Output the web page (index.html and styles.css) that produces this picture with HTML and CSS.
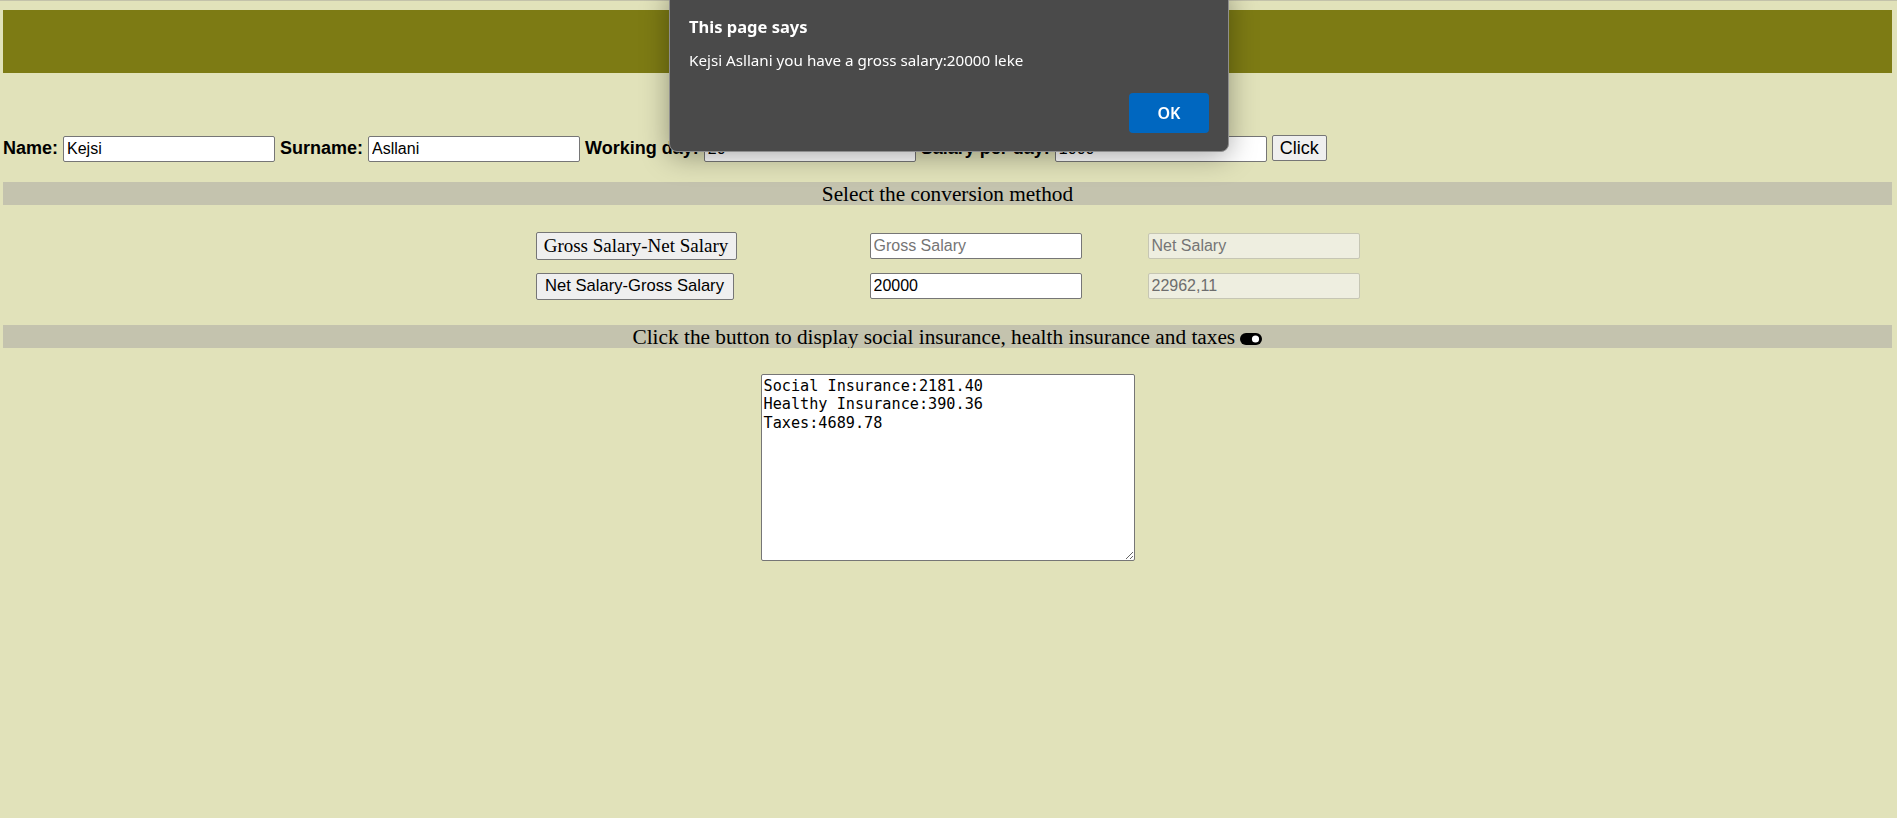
FILE: index.html
```html
<!DOCTYPE html>
<html lang="en">
<head>
<meta charset="utf-8">
<title>Salary Calculator</title>
<link rel="stylesheet" href="styles.css">
</head>
<body>
<div class="page">
  <header class="topbar"></header>

  <form class="info-row">
    <label class="lbl" for="name">Name:</label>
    <input class="field" id="name" type="text" value="Kejsi">
    <label class="lbl" for="surname">Surname:</label>
    <input class="field" id="surname" type="text" value="Asllani">
    <label class="lbl" for="days">Working day:</label>
    <input class="field" id="days" type="text" value="20">
    <label class="lbl" for="perday">Salary per day:</label>
    <input class="field" id="perday" type="text" value="1000">
    <button class="click-btn" type="button">Click</button>
  </form>

  <div class="section-bar">Select the conversion method</div>

  <div class="convert-grid">
    <button class="conv-btn serif" type="button">Gross Salary-Net Salary</button>
    <input class="field conv-in" type="text" placeholder="Gross Salary">
    <input class="field conv-out" type="text" placeholder="Net Salary" disabled>

    <button class="conv-btn sans" type="button">Net Salary-Gross Salary</button>
    <input class="field conv-in" type="text" value="20000">
    <input class="field conv-out" type="text" value="22962,11" disabled>
  </div>

  <div class="section-bar">Click the button to display social insurance, health insurance and taxes <svg class="toggle" width="22" height="12" viewBox="0 0 22 12"><rect x="0" y="0" width="22" height="12" rx="6" fill="#000"/><circle cx="15.5" cy="6" r="3.6" fill="#fff"/></svg></div>

  <div class="result-wrap">
    <textarea class="result" readonly>Social Insurance:2181.40
Healthy Insurance:390.36
Taxes:4689.78</textarea>
  </div>
</div>

<div class="alert" role="alertdialog">
  <div class="alert-title">This page says</div>
  <div class="alert-msg">Kejsi Asllani you have a gross salary:20000 leke</div>
  <div class="alert-actions">
    <button class="alert-ok" type="button">OK</button>
  </div>
</div>
</body>
</html>
```

FILE: styles.css
```css
html, body {
  margin: 0;
  padding: 0;
}
body {
  background: #e1e2ba;
  border-top: 1px solid #c3c2aa;
  min-height: 817px;
  font-family: "Liberation Serif", "Times New Roman", serif;
}
.page {
  padding: 0 5px 0 3px;
}
.topbar {
  margin-top: 9px;
  height: 63px;
  background: #7d7b14;
}
.info-row {
  margin: 62px 0 0 0;
  display: flex;
  align-items: baseline;
  column-gap: 5px;
  font-family: "Liberation Sans", Arial, sans-serif;
}
.lbl {
  font-weight: bold;
  font-size: 18px;
  color: #000;
}
.field {
  box-sizing: border-box;
  width: 212px;
  height: 26px;
  padding: 1px 3px;
  border: 1px solid #767676;
  border-radius: 2px;
  background: #fff;
  font-family: "Liberation Sans", Arial, sans-serif;
  font-size: 16px;
  color: #000;
  margin: 0;
}
.field::placeholder {
  color: #757575;
}
.field:disabled {
  background: #eeeee0;
  border-color: #c6c6b4;
  color: #6d6d6d;
}
.click-btn {
  box-sizing: border-box;
  width: 55px;
  height: 26px;
  padding: 0;
  margin: 0;
  border: 1px solid #767676;
  border-radius: 2px;
  background: #efefef;
  font-family: "Liberation Sans", Arial, sans-serif;
  font-size: 18px;
  color: #000;
}
.section-bar {
  margin-top: 20px;
  height: 23px;
  line-height: 25px;
  overflow: hidden;
  background: #c4c3ae;
  text-align: center;
  font-family: "Liberation Serif", "Times New Roman", serif;
  font-size: 21.3px;
  color: #000;
}
.toggle {
  vertical-align: -1px;
}
.convert-grid {
  margin: 27px auto 0 auto;
  display: grid;
  grid-template-columns: 334px 278px 212px;
  row-gap: 13px;
  justify-content: center;
  align-items: center;
}
.conv-btn {
  box-sizing: border-box;
  margin: 0;
  padding: 0;
  border: 1px solid #767676;
  border-radius: 2px;
  background: #efefef;
  color: #000;
  justify-self: start;
}
.conv-btn.serif {
  width: 201px;
  height: 28px;
  font-family: "Liberation Serif", "Times New Roman", serif;
  font-size: 19px;
}
.conv-btn.sans {
  width: 198px;
  height: 27px;
  font-family: "Liberation Sans", Arial, sans-serif;
  font-size: 16.6px;
}
.convert-grid + .section-bar {
  margin-top: 25px;
}
.result-wrap {
  margin-top: 26px;
  display: flex;
  justify-content: center;
}
.result {
  box-sizing: border-box;
  width: 374px;
  height: 187px;
  margin: 0;
  padding: 2px;
  border: 1px solid #767676;
  border-radius: 2px;
  background: #fff;
  font-family: "DejaVu Sans Mono", "Liberation Mono", monospace;
  font-size: 15.2px;
  line-height: 18.8px;
  color: #000;
  resize: both;
}

/* alert dialog overlay */
.alert {
  position: fixed;
  left: 669px;
  top: -12px;
  box-sizing: border-box;
  width: 560px;
  height: 164px;
  background: #4a4a4a;
  border: 1px solid #8e8e8e;
  border-radius: 8px;
  box-shadow: 0 4px 28px rgba(0, 0, 0, 0.35);
  padding: 27px 19px 0 19px;
  font-family: "Noto Sans", "Open Sans", sans-serif;
  color: #fff;
  display: flex;
  flex-direction: column;
}
.alert-title {
  font-weight: bold;
  font-size: 16.5px;
  line-height: 22px;
}
.alert-msg {
  margin-top: 12px;
  font-size: 15.2px;
  line-height: 21px;
}
.alert-actions {
  margin-top: auto;
  padding-bottom: 18px;
  display: flex;
  justify-content: flex-end;
}
.alert-ok {
  width: 80px;
  height: 40px;
  border: 0;
  border-radius: 4px;
  background: #0067c0;
  color: #fff;
  font-family: "Noto Sans", "Open Sans", sans-serif;
  font-weight: 600;
  font-size: 16px;
  padding: 0;
}
```
